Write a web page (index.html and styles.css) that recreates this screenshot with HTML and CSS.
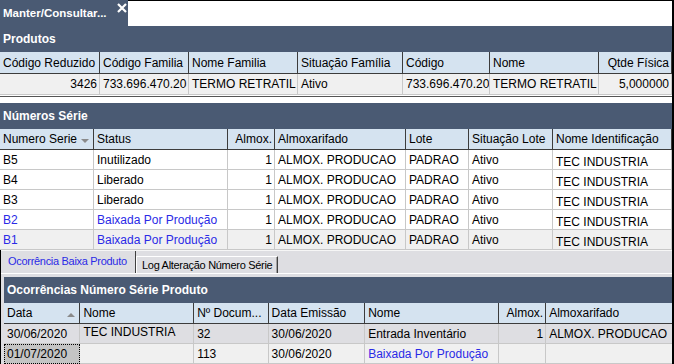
FILE: index.html
```html
<!DOCTYPE html>
<html lang="pt-BR">
<head>
    <meta charset="UTF-8">
    <title>Manter/Consultar Número Série</title>
    <link rel="stylesheet" href="styles.css">
</head>
<body>
    <div class="window">
        <div class="doc-tabs">
            <div class="doc-tab">
                <span>Manter/Consultar...</span>
                <svg class="close" width="10" height="10" viewBox="0 0 10 10"><path d="M1 1L9 9M9 1L1 9" stroke="#fff" stroke-width="2.2"/></svg>
            </div>
            <div class="doc-tabs-rest"></div>
        </div>

        <div class="panel-title">Produtos</div>
        <table class="grid grid-produtos">
            <colgroup>
                <col style="width:100px"><col style="width:89px"><col style="width:109px"><col style="width:105px">
                <col style="width:87px"><col style="width:109px"><col style="width:73px">
            </colgroup>
            <thead>
                <tr>
                    <th>Código Reduzido</th>
                    <th>Código Familia</th>
                    <th>Nome Familia</th>
                    <th>Situação Família</th>
                    <th>Código</th>
                    <th>Nome</th>
                    <th class="num">Qtde Física</th>
                </tr>
            </thead>
            <tbody>
                <tr class="alt">
                    <td class="num">3426</td>
                    <td>733.696.470.20</td>
                    <td>TERMO RETRATIL</td>
                    <td>Ativo</td>
                    <td>733.696.470.20</td>
                    <td>TERMO RETRATIL</td>
                    <td class="num">5,000000</td>
                </tr>
            </tbody>
        </table>

        <div class="divider"></div>

        <div class="panel-title">Números Série</div>
        <table class="grid grid-series">
            <colgroup>
                <col style="width:94px"><col style="width:134px"><col style="width:47px"><col style="width:131px">
                <col style="width:63px"><col style="width:84px"><col style="width:119px">
            </colgroup>
            <thead>
                <tr>
                    <th>Numero Serie<span class="sort down"></span></th>
                    <th>Status</th>
                    <th class="num">Almox.</th>
                    <th>Almoxarifado</th>
                    <th>Lote</th>
                    <th>Situação Lote</th>
                    <th>Nome Identificação</th>
                </tr>
            </thead>
            <tbody>
                <tr>
                    <td>B5</td><td>Inutilizado</td><td class="num">1</td><td>ALMOX. PRODUCAO</td>
                    <td>PADRAO</td><td>Ativo</td><td class="low">TEC INDUSTRIA</td>
                </tr>
                <tr>
                    <td>B4</td><td>Liberado</td><td class="num">1</td><td>ALMOX. PRODUCAO</td>
                    <td>PADRAO</td><td>Ativo</td><td class="low">TEC INDUSTRIA</td>
                </tr>
                <tr>
                    <td>B3</td><td>Liberado</td><td class="num">1</td><td>ALMOX. PRODUCAO</td>
                    <td>PADRAO</td><td>Ativo</td><td class="low">TEC INDUSTRIA</td>
                </tr>
                <tr>
                    <td class="link">B2</td><td class="link">Baixada Por Produção</td><td class="num">1</td><td>ALMOX. PRODUCAO</td>
                    <td>PADRAO</td><td>Ativo</td><td class="low">TEC INDUSTRIA</td>
                </tr>
                <tr class="alt">
                    <td class="link">B1</td><td class="link">Baixada Por Produção</td><td class="num">1</td><td>ALMOX. PRODUCAO</td>
                    <td>PADRAO</td><td>Ativo</td><td class="low">TEC INDUSTRIA</td>
                </tr>
            </tbody>
        </table>

        <div class="tab-control">
            <div class="tab-strip">
                <div class="tab active">Ocorrência Baixa Produto</div>
                <div class="tab">Log Alteração Número Série</div>
            </div>
            <div class="tab-page">
                <div class="panel-title">Ocorrências Número Série Produto</div>
                <table class="grid grid-ocorrencias">
                    <colgroup>
                        <col style="width:76px"><col style="width:113px"><col style="width:74px"><col style="width:96px">
                        <col style="width:133px"><col style="width:47px"><col style="width:129px">
                    </colgroup>
                    <thead>
                        <tr>
                            <th>Data<span class="sort up"></span></th>
                            <th>Nome</th>
                            <th>Nº Docum...</th>
                            <th>Data Emissão</th>
                            <th>Nome</th>
                            <th class="num">Almox.</th>
                            <th>Almoxarifado</th>
                        </tr>
                    </thead>
                    <tbody>
                        <tr>
                            <td>30/06/2020</td><td class="high">TEC INDUSTRIA</td><td>32</td><td>30/06/2020</td>
                            <td>Entrada Inventário</td><td class="num">1</td><td>ALMOX. PRODUCAO</td>
                        </tr>
                        <tr class="alt">
                            <td class="focus">01/07/2020</td><td></td><td>113</td><td>30/06/2020</td>
                            <td class="link">Baixada Por Produção</td><td></td><td></td>
                        </tr>
                    </tbody>
                </table>
            </div>
        </div>
    </div>
</body>
</html>
```

FILE: styles.css
```css
*{
    margin: 0;
    padding: 0;
    box-sizing: border-box;
}

:root{
    --title: #4a5a73;
    --head: #d5e3f0;
    --line: #c8c8c8;
    --headLine: #3c3c3c;
    --alt: #f0f0f0;
    --blue: #2a2ae6;
    --strip: #dedee2;
}

body{
    background-color: #fff;
    color: #000;
    font-family: "Liberation Sans", Arial, sans-serif;
    font-size: 12px;
}

.window{
    width: 674px;
    height: 364px;
    border-right: 2px solid #000;
    overflow: hidden;
}

.doc-tabs{
    display: flex;
    height: 26px;
}

.doc-tab{
    width: 128px;
    display: flex;
    padding-left: 3px;
    background-color: var(--title);
    color: #fff;
    font-size: 11.5px;
    font-weight: bold;
    line-height: 27px;
}

.doc-tab .close{
    margin: 3px 1px 0 auto;
}

.doc-tabs-rest{
    flex: 1;
    border-top: 1px solid #000;
}

.panel-title{
    height: 26px;
    padding-left: 3px;
    background-color: var(--title);
    color: #fff;
    font-weight: bold;
    line-height: 26px;
}

.grid{
    width: 672px;
    table-layout: fixed;
    border-collapse: separate;
    border-spacing: 0;
}

.grid th,
.grid td{
    padding: 0 2px 0 3px;
    white-space: nowrap;
    overflow: hidden;
    text-align: left;
    vertical-align: middle;
}

.grid th{
    height: 21px;
    background-color: var(--head);
    font-weight: normal;
    border-right: 1px solid var(--headLine);
    border-bottom: 1px solid var(--headLine);
}

.grid td{
    height: 20px;
    border-right: 1px solid var(--line);
    border-bottom: 1px solid var(--line);
}

.grid-produtos th{
    height: 22px;
}

.grid-produtos td{
    height: 21px;
}

.grid .num{
    text-align: right;
}

.grid tr.alt td{
    background-color: var(--alt);
}

.grid td.link{
    color: var(--blue);
}

.grid td.low{
    padding-top: 5px;
}

.grid td.high{
    padding-bottom: 3px;
}

.grid tr.alt td.focus{
    background-color: #c4c4c4;
    outline: 1px dotted #000;
    outline-offset: -1px;
}

.sort{
    float: right;
    width: 0;
    height: 0;
    margin: 7px 2px 0 0;
    border-left: 4px solid transparent;
    border-right: 4px solid transparent;
}

.sort.down{
    border-top: 4px solid #8a8a8a;
}

.sort.up{
    border-bottom: 4px solid #8a8a8a;
}

.divider{
    height: 7px;
    margin-top: 1px;
    border-top: 1px solid #555;
}

.tab-control{
    border-left: 1px solid #000;
    background-color: var(--strip);
}

.tab-strip{
    height: 23px;
    display: flex;
    align-items: flex-end;
    padding-left: 1px;
    border-top: 1px solid #f6f6f6;
    font-size: 11px;
}

.tab{
    height: 17px;
    padding: 0 5px 0 5px;
    line-height: 16px;
    letter-spacing: -0.3px;
    border-top: 1px solid #fff;
    border-left: 1px solid #fff;
    border-right: 1px solid #404040;
    box-shadow: inset -1px 0 0 #a0a0a0;
}

.tab.active{
    height: 22px;
    width: 134px;
    padding-left: 6px;
    line-height: 21px;
    color: var(--blue);
    border-top: none;
    border-left: none;
    box-shadow: none;
}

.tab-page{
    padding: 3px 0 0 3px;
    border-top: 1px solid #fff;
}
```
